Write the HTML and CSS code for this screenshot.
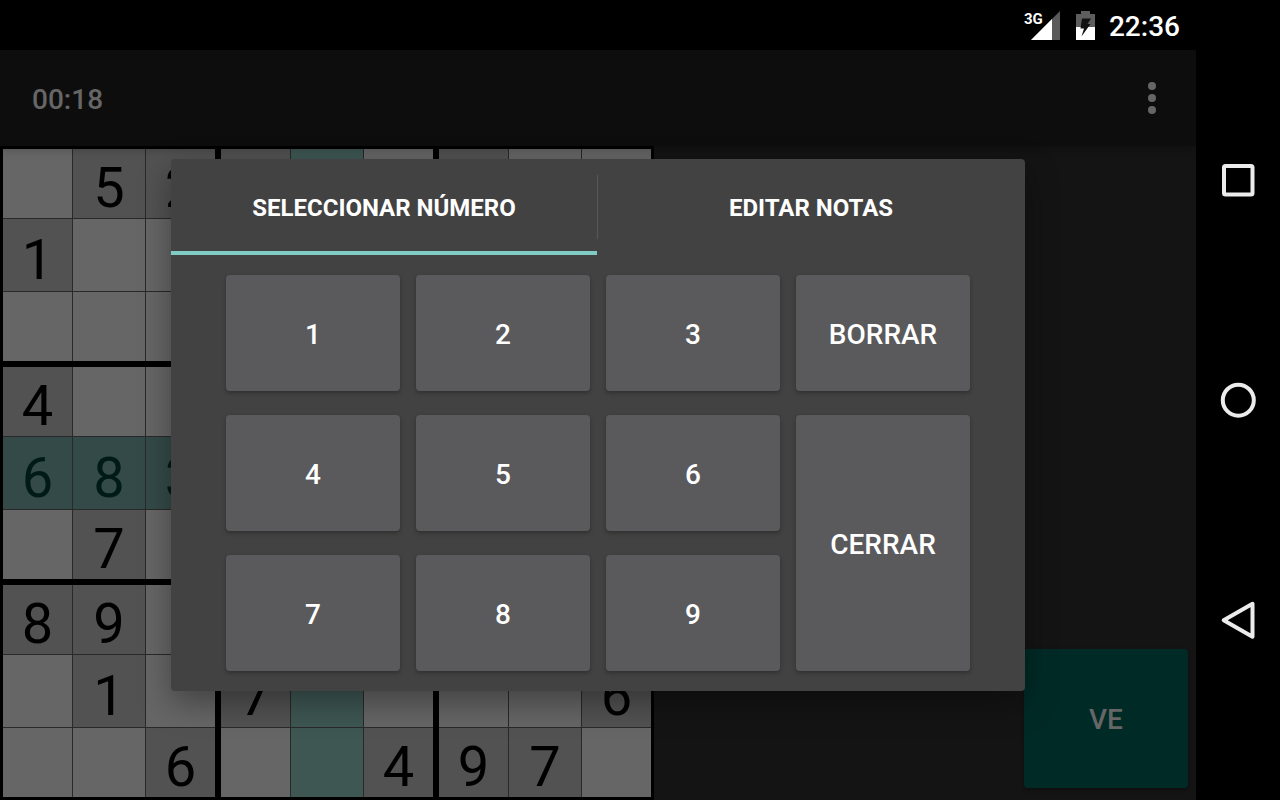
FILE: index.html
```html
<!DOCTYPE html>
<html lang="es">
<head>
<meta charset="utf-8">
<meta name="viewport" content="width=device-width, initial-scale=1">
<title>Sudoku</title>
<link rel="stylesheet" href="styles.css">
</head>
<body>
<div class="app">
  <header class="status">
    <span class="signal">
      <svg width="29" height="29" viewBox="0 0 29 29" aria-hidden="true"><path d="M29 0V29H0Z" fill="#5a5a5a"/><path d="M21 8V29H0Z" fill="#fff"/></svg>
      <span class="network">3G</span>
    </span>
    <svg class="battery" width="19" height="29" viewBox="0 0 19 29" aria-hidden="true">
      <path d="M5 0H14V3H19V16H0V3H5Z" fill="#5e5e5e"/>
      <path d="M0 16H19V29H0Z" fill="#fff"/>
      <path d="M6 7.500H15L11.500 13H14.500L5.500 25.500L8 17.500H4.500Z" fill="#111"/>
    </svg>
    <time class="clock">22:36</time>
  </header>
  <div class="toolbar">
    <span class="timer">00:18</span>
    <button class="more" type="button" aria-label="Más opciones">
      <svg width="8" height="32" viewBox="0 0 8 32" fill="#666"><circle cx="4" cy="4" r="4"/><circle cx="4" cy="16" r="4"/><circle cx="4" cy="28" r="4"/></svg>
    </button>
  </div>
  <main class="game">
    <div class="board">
      <div class="box"><i></i><i class="given">5</i><i class="given">2</i><i class="given">1</i><i></i><i></i><i></i><i></i><i></i></div>
      <div class="box"><i class="given"></i><i class="mark"></i><i></i><i></i><i class="mark"></i><i></i><i></i><i class="mark"></i><i></i></div>
      <div class="box"><i class="given"></i><i></i><i></i><i></i><i></i><i></i><i></i><i></i><i></i></div>
      <div class="box"><i class="given">4</i><i></i><i></i><i class="given mark">6</i><i class="given mark">8</i><i class="given mark">3</i><i></i><i class="given">7</i><i></i></div>
      <div class="box"><i></i><i class="mark"></i><i></i><i class="mark"></i><i class="mark"></i><i class="mark"></i><i></i><i class="mark"></i><i></i></div>
      <div class="box"><i></i><i></i><i></i><i class="mark"></i><i class="mark"></i><i class="mark"></i><i></i><i></i><i></i></div>
      <div class="box"><i class="given">8</i><i class="given">9</i><i></i><i></i><i class="given">1</i><i></i><i></i><i></i><i class="given">6</i></div>
      <div class="box"><i></i><i class="mark"></i><i></i><i class="given">7</i><i class="mark"></i><i></i><i></i><i class="mark"></i><i class="given">4</i></div>
      <div class="box"><i></i><i></i><i></i><i></i><i></i><i class="given">6</i><i class="given">9</i><i class="given">7</i><i></i></div>
    </div>
    <button class="verify" type="button">VE</button>
  </main>
  <div class="overlay">
    <section class="dialog" role="dialog" aria-label="Seleccionar número">
      <div class="tabs" role="tablist">
        <button class="tab active" type="button" role="tab" aria-selected="true">SELECCIONAR NÚMERO</button>
        <button class="tab" type="button" role="tab" aria-selected="false">EDITAR NOTAS</button>
      </div>
      <div class="keys">
        <button class="key" type="button">1</button>
        <button class="key" type="button">2</button>
        <button class="key" type="button">3</button>
        <button class="key" type="button">BORRAR</button>
        <button class="key" type="button">4</button>
        <button class="key" type="button">5</button>
        <button class="key" type="button">6</button>
        <button class="key tall" type="button">CERRAR</button>
        <button class="key" type="button">7</button>
        <button class="key" type="button">8</button>
        <button class="key" type="button">9</button>
      </div>
    </section>
  </div>
</div>
<nav class="system">
  <button type="button" aria-label="Recientes"><svg width="40" height="40" viewBox="0 0 40 40"><rect x="6" y="6" width="28.500" height="28.500" rx="1.500"/></svg></button>
  <button type="button" aria-label="Inicio"><svg width="40" height="40" viewBox="0 0 40 40"><circle cx="20.300" cy="20.200" r="15.500"/></svg></button>
  <button type="button" aria-label="Atrás"><svg width="40" height="40" viewBox="0 0 40 40"><path d="M5.700 20.300L34.500 3.800V36.800Z"/></svg></button>
</nav>
</body>
</html>
```
FILE: styles.css
```css
* { box-sizing: border-box; }

body {
  margin: 0;
  height: 100vh;
  display: flex;
  overflow: hidden;
  background: #000;
  color: #fff;
  font-family: Roboto, "Liberation Sans", sans-serif;
}

button {
  margin: 0;
  padding: 0;
  border: 0;
  background: none;
  color: inherit;
  font: inherit;
}

svg { display: block; }

.app {
  position: relative;
  flex: 1;
  min-width: 0;
  display: flex;
  flex-direction: column;
  background: #141414;
}

.status {
  height: 50px;
  flex: none;
  display: flex;
  align-items: center;
  justify-content: flex-end;
  padding: 0 16px;
  background: #000;
}

.signal {
  position: relative;
  margin-right: 16px;
}

.network {
  position: absolute;
  left: -7px;
  top: 0;
  font-size: 15px;
  line-height: 16px;
  font-weight: 700;
}

.battery { margin-right: 14px; }

.clock {
  font-size: 28px;
  line-height: 32px;
  font-weight: 500;
  padding-top: 4px;
}

.toolbar {
  position: relative;
  z-index: 1;
  height: 96px;
  flex: none;
  display: flex;
  align-items: center;
  justify-content: space-between;
  padding: 0 20px 0 32px;
  background: #0d0d0d;
  box-shadow: 0 2px 10px rgba(0, 0, 0, 0.3);
}

.timer {
  color: #666;
  font-size: 28px;
  line-height: 32px;
  font-weight: 500;
  padding-top: 4px;
}

.more {
  width: 48px;
  height: 48px;
  display: grid;
  place-items: center;
}

.game {
  flex: 1;
  min-height: 0;
  display: flex;
  align-items: flex-end;
  justify-content: space-between;
}

.board {
  height: 100%;
  aspect-ratio: 1;
  display: grid;
  grid-template: repeat(3, minmax(0, 1fr)) / repeat(3, minmax(0, 1fr));
  gap: 6px;
  padding: 3px;
  background: #000;
}

.box {
  display: grid;
  grid-template: minmax(0, 23fr) minmax(0, 24fr) minmax(0, 23fr) / minmax(0, 23fr) minmax(0, 24fr) minmax(0, 23fr);
  gap: 1px;
  background: #292929;
}

.box i {
  display: flex;
  align-items: center;
  justify-content: center;
  padding-top: 9px;
  background: #666;
  color: #000;
  font-size: 56px;
  line-height: 56px;
  font-style: normal;
}

.box .given { background: #525252; }
.box .mark { background: #3e5753; }
.box .given.mark { background: #344a48; color: #001a17; }

.verify {
  width: 164px;
  height: 139px;
  margin: 0 8px 12px;
  padding-top: 2px;
  border-radius: 4px;
  background: #002a26;
  color: #666;
  font-size: 28px;
  font-weight: 500;
  box-shadow: 0 2px 4px rgba(0, 0, 0, 0.3);
}

.overlay {
  position: absolute;
  inset: 50px 0 0;
  z-index: 2;
  display: grid;
  place-items: center;
}

.dialog {
  width: 854px;
  max-width: 100%;
  border-radius: 4px;
  background: #424242;
  box-shadow: 0 12px 32px rgba(0, 0, 0, 0.35);
}

.tabs {
  height: 96px;
  display: grid;
  grid-template-columns: 426fr 428fr;
  background: linear-gradient(#585858, #585858) 426px 16px / 1px 64px no-repeat;
}

.tab {
  border: solid transparent;
  border-width: 4px 0;
  padding-top: 2px;
  font-size: 24px;
  font-weight: 700;
}

.tab.active { border-bottom-color: #80cbc4; }

.keys {
  display: grid;
  grid-template-columns: repeat(4, 1fr);
  grid-auto-rows: 116px;
  gap: 24px 16px;
  padding: 20px 55px;
}

.key {
  border-radius: 4px;
  background: #5a5a5c;
  font-size: 28px;
  font-weight: 500;
  padding-top: 2px;
  box-shadow: 0 2px 4px rgba(0, 0, 0, 0.3);
}

.tall { grid-row: span 2; }

.system {
  width: 84px;
  flex: none;
  display: flex;
  flex-direction: column;
  justify-content: center;
}

.system button {
  height: 220px;
  display: grid;
  place-items: center;
}

.system svg {
  fill: none;
  stroke: #ececec;
  stroke-width: 4;
  stroke-linejoin: round;
}
```
